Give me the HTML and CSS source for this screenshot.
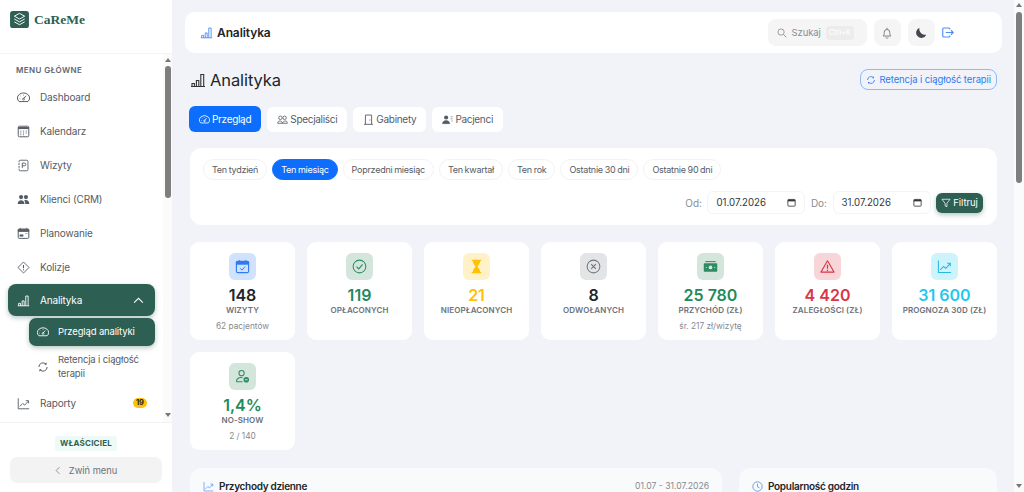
FILE: index.html
```html
<!DOCTYPE html>
<html lang="pl">
<head>
    <meta charset="UTF-8">
    <meta name="viewport" content="width=device-width, initial-scale=1.0">
    <title>Analityka</title>
    <link rel="stylesheet" href="styles.css">
</head>
<body>
    <!-- Shared icons -->
    <svg class="icon-defs" aria-hidden="true">
        <symbol id="i-gauge" viewBox="0 0 16 16"><path d="M2.500 13A7.500 6.300 0 1 1 13.500 13Z" fill="none" stroke="currentColor" stroke-width="1.200" stroke-linejoin="round"/><path d="M8 9.500 11 6" stroke="currentColor" stroke-width="1.200"/><circle cx="8" cy="10" r="1.200" fill="none" stroke="currentColor"/><path d="M4 9.500H3M5 6.800 4.300 6.100M8 5.500V4.500" stroke="currentColor"/></symbol>
        <symbol id="i-bars" viewBox="0 0 16 16"><path d="M1 14.500h14M2 14.500v-3h2.400v3M6.400 14.500v-6h2.400v6M10.800 14.500V2.500h2.900v12" fill="none" stroke="currentColor" stroke-width="1.100"/></symbol>
        <symbol id="i-sync" viewBox="0 0 16 16"><path d="M2.500 8A5.500 5.500 0 0 1 12 4.200M13.500 8A5.500 5.500 0 0 1 4 11.800" fill="none" stroke="currentColor" stroke-width="1.300"/><path d="M12.800 1.800V5H9.800ZM3.200 14.200V11H6.200Z" fill="currentColor"/></symbol>
        <symbol id="i-trend" viewBox="0 0 16 16"><path d="M1.500 1.500V14.500H15" fill="none" stroke="currentColor" stroke-width="1.100"/><path d="M3.500 11.500 7 8l2.500 2L14 5M10.800 4.500H14.200V7.800" fill="none" stroke="currentColor" stroke-width="1.100"/></symbol>
    </svg>

    <aside class="sidebar">
        <div class="brand">
            <svg class="brand-logo" viewBox="0 0 20 18"><rect width="20" height="18" rx="3" fill="#2d5f53"/><path d="M10 2.500 15.500 5.500 10 8.500 4.500 5.500ZM4.500 8.500 10 11.500 15.500 8.500M4.500 11.500 10 14.500 15.500 11.500" fill="none" stroke="#fff" stroke-width="1" stroke-linejoin="round"/></svg>
            <span class="brand-name">CaReMe</span>
        </div>

        <div class="side-body">
            <nav class="side-nav">
                <div class="nav-label">MENU GŁÓWNE</div>
                <a class="nav-item"><svg class="nav-icon"><use href="#i-gauge"/></svg>Dashboard</a>
                <a class="nav-item"><svg class="nav-icon" viewBox="0 0 16 16"><rect x="1.500" y="1.500" width="13" height="13" rx="1.500" fill="none" stroke="currentColor" stroke-width="1.200"/><path d="M1.500 2.500h13v2.500h-13Z" fill="currentColor"/><path d="M4 7.500h1.400M7.300 7.500h1.400M10.600 7.500H12M4 9.800h1.400M7.300 9.800h1.400M10.600 9.800H12M4 12h1.400M7.300 12h1.400" stroke="currentColor"/></svg>Kalendarz</a>
                <a class="nav-item"><svg class="nav-icon" viewBox="0 0 16 16"><rect x="2.500" y="1.500" width="11" height="13" rx="1.500" fill="none" stroke="currentColor" stroke-width="1.100"/><path d="M6.500 11V5h2.600a1.600 1.600 0 0 1 0 3.400H6.500" fill="none" stroke="currentColor" stroke-width="1.100"/><path d="M1 4.500h2.500M1 8h2.500M1 11.500h2.500" stroke="#fff"/></svg>Wizyty</a>
                <a class="nav-item"><svg class="nav-icon" viewBox="0 0 16 16"><circle cx="5" cy="5" r="2.600" fill="currentColor"/><circle cx="11" cy="5" r="2.600" fill="currentColor"/><path d="M.8 13.500c0-6 8.400-6 8.400 0ZM10.200 13.500c0-2-.4-3.300-1.300-4.400 2.800-1.200 6.300.2 6.300 4.400Z" fill="currentColor"/></svg>Klienci (CRM)</a>
                <a class="nav-item"><svg class="nav-icon" viewBox="0 0 16 16"><rect x="1.500" y="2.500" width="13" height="11.500" rx="1.300" fill="none" stroke="currentColor" stroke-width="1.200"/><path d="M1.500 3h13v2.500h-13ZM4 1v2M12 1v2" fill="currentColor" stroke="currentColor"/><path d="M3.500 9.500h4v2h-4ZM10 8h3" fill="currentColor" stroke="currentColor" stroke-width=".6"/></svg>Planowanie</a>
                <a class="nav-item"><svg class="nav-icon" viewBox="0 0 16 16"><path d="M8 1.200 14.800 8 8 14.800 1.200 8Z" fill="none" stroke="currentColor" stroke-width="1.100" stroke-linejoin="round"/><path d="M8 4.800V9M8 10.300v1.200" stroke="currentColor" stroke-width="1.300"/></svg>Kolizje</a>
                <a class="nav-item nav-item-open"><svg class="nav-icon"><use href="#i-bars"/></svg>Analityka<svg class="nav-chevron" viewBox="0 0 12 8"><path d="M1 6.500 6 1.500l5 5" fill="none" stroke="currentColor" stroke-width="1.200"/></svg></a>
                <a class="sub-item sub-item-active"><svg class="sub-icon"><use href="#i-gauge"/></svg>Przegląd analityki</a>
                <a class="sub-item"><svg class="sub-icon"><use href="#i-sync"/></svg><span>Retencja i ciągłość terapii</span></a>
                <a class="nav-item"><svg class="nav-icon"><use href="#i-trend"/></svg>Raporty<span class="nav-badge">19</span></a>
            </nav>
            <div class="scrollbar scrollbar-side">
                <span class="scroll-up"></span>
                <span class="scroll-thumb"></span>
                <span class="scroll-down"></span>
            </div>
        </div>

        <div class="side-footer">
            <span class="role-badge">WŁAŚCICIEL</span>
            <button class="collapse-btn"><svg class="collapse-icon" viewBox="0 0 8 12"><path d="M6 1.500 1.500 6 6 10.500" fill="none" stroke="currentColor"/></svg>Zwiń menu</button>
        </div>
    </aside>

    <main class="main">
        <header class="topbar">
            <svg class="topbar-icon"><use href="#i-bars"/></svg>
            <span class="topbar-title">Analityka</span>
            <div class="search">
                <svg class="search-icon" viewBox="0 0 16 16"><circle cx="6.500" cy="6.500" r="5" fill="none" stroke="currentColor" stroke-width="1.300"/><path d="M10.300 10.300 15 15" stroke="currentColor" stroke-width="1.400"/></svg>
                Szukaj
                <span class="search-key">Ctrl+K</span>
            </div>
            <button class="round-btn"><svg class="round-icon" viewBox="0 0 16 16"><path d="M3 12c1-1.200 1.300-2.500 1.300-5a3.700 3.700 0 0 1 7.400 0c0 2.500.3 3.800 1.300 5ZM8 1v2M6.500 14a1.600 1.600 0 0 0 3 0" fill="none" stroke="currentColor" stroke-width="1.100"/></svg></button>
            <button class="round-btn"><svg class="round-icon moon" viewBox="0 0 16 16"><path d="M6 1a7 7 0 1 0 9 9.200A7.500 7.500 0 0 1 6 1Z" fill="currentColor"/></svg></button>
            <svg class="logout-icon" viewBox="0 0 16 14"><path d="M10.500 3V2.300A1.300 1.300 0 0 0 9.200 1H2.300A1.300 1.300 0 0 0 1 2.300v9.400A1.300 1.300 0 0 0 2.300 13h6.900a1.300 1.300 0 0 0 1.300-1.300V11M5 7h10M12 4l3 3-3 3" fill="none" stroke="currentColor" stroke-width="1.500"/></svg>
        </header>

        <div class="content">
            <div class="page-head">
                <svg class="page-icon"><use href="#i-bars"/></svg>
                <h1 class="page-title">Analityka</h1>
                <a class="retention-link"><svg class="retention-icon"><use href="#i-sync"/></svg>Retencja i ciągłość terapii</a>
            </div>

            <div class="tabs">
                <a class="tab tab-active"><svg class="tab-icon"><use href="#i-gauge"/></svg>Przegląd</a>
                <a class="tab"><svg class="tab-icon" viewBox="0 0 16 16"><circle cx="5" cy="5.500" r="2.500" fill="none" stroke="currentColor" stroke-width="1.200"/><circle cx="11" cy="5.500" r="2.500" fill="none" stroke="currentColor" stroke-width="1.200"/><path d="M1 13.500c0-4.500 6-4.500 7 0ZM8 13.500c1-4.500 7-4.500 7 0Z" fill="none" stroke="currentColor" stroke-width="1.200"/></svg>Specjaliści</a>
                <a class="tab"><svg class="tab-icon" viewBox="0 0 16 16"><path d="M1.500 15h13M3.500 15V1.500h9V15" fill="none" stroke="currentColor" stroke-width="1.300"/><path d="M10 8v1.500" stroke="currentColor" stroke-width="1.300"/></svg>Gabinety</a>
                <a class="tab"><svg class="tab-icon" viewBox="0 0 16 16"><circle cx="6" cy="5" r="3" fill="currentColor"/><path d="M.8 14c0-6 10.400-6 10.400 0ZM12.500 4h3M12.500 7h3M13.500 10h2" fill="currentColor" stroke="currentColor" stroke-width=".8"/></svg>Pacjenci</a>
            </div>

            <section class="filter-card">
                <div class="pills">
                    <a class="pill">Ten tydzień</a>
                    <a class="pill pill-active">Ten miesiąc</a>
                    <a class="pill">Poprzedni miesiąc</a>
                    <a class="pill">Ten kwartał</a>
                    <a class="pill">Ten rok</a>
                    <a class="pill">Ostatnie 30 dni</a>
                    <a class="pill">Ostatnie 90 dni</a>
                </div>
                <div class="date-row">
                    <span class="date-label">Od:</span>
                    <div class="date-input">01.07.2026<svg class="date-icon" viewBox="0 0 16 16"><rect x="1.500" y="2.500" width="13" height="12" rx="1.500" fill="none" stroke="currentColor" stroke-width="1.500"/><path d="M1.500 3h13v3h-13Z" fill="currentColor"/></svg></div>
                    <span class="date-label">Do:</span>
                    <div class="date-input">31.07.2026<svg class="date-icon" viewBox="0 0 16 16"><rect x="1.500" y="2.500" width="13" height="12" rx="1.500" fill="none" stroke="currentColor" stroke-width="1.500"/><path d="M1.500 3h13v3h-13Z" fill="currentColor"/></svg></div>
                    <button class="filter-btn"><svg class="filter-icon" viewBox="0 0 16 16"><path d="M1.500 2h13L9.500 8.500V14l-3-1.500v-4Z" fill="none" stroke="currentColor" stroke-width="1.200" stroke-linejoin="round"/></svg>Filtruj</button>
                </div>
            </section>

            <section class="stats">
                <div class="stat">
                    <div class="stat-icon tint-blue"><svg viewBox="0 0 16 16"><rect x="1.500" y="2.500" width="13" height="12" rx="1.500" fill="none" stroke="currentColor" stroke-width="1.200"/><path d="M1.500 3h13v2.500h-13ZM4.500 1v2M11.500 1v2" fill="currentColor" stroke="currentColor"/><path d="M5.500 10 7.500 11.800 10.800 8" fill="none" stroke="currentColor"/></svg></div>
                    <div class="stat-value">148</div>
                    <div class="stat-label">Wizyty</div>
                    <div class="stat-sub">62 pacjentów</div>
                </div>
                <div class="stat">
                    <div class="stat-icon tint-green"><svg viewBox="0 0 16 16"><circle cx="8" cy="8" r="6.800" fill="none" stroke="currentColor" stroke-width="1.100"/><path d="M4.800 8.200 7.200 10.500 11.300 5.800" fill="none" stroke="currentColor" stroke-width="1.200"/></svg></div>
                    <div class="stat-value text-green">119</div>
                    <div class="stat-label">Opłaconych</div>
                </div>
                <div class="stat">
                    <div class="stat-icon tint-yellow"><svg viewBox="0 0 16 16"><path d="M3 1.500h10M3 14.500h10" stroke="currentColor" stroke-width="1.500"/><path d="M4 2h8c0 3-2.500 4.500-3 6 .5 1.500 3 3 3 6H4c0-3 2.500-4.500 3-6-.5-1.500-3-3-3-6Z" fill="currentColor"/></svg></div>
                    <div class="stat-value text-yellow">21</div>
                    <div class="stat-label">Nieopłaconych</div>
                </div>
                <div class="stat">
                    <div class="stat-icon tint-grey"><svg viewBox="0 0 16 16"><circle cx="8" cy="8" r="6.800" fill="none" stroke="currentColor" stroke-width="1.100"/><path d="M5.500 5.500 10.500 10.500M10.500 5.500 5.500 10.500" stroke="currentColor" stroke-width="1.200"/></svg></div>
                    <div class="stat-value">8</div>
                    <div class="stat-label">Odwołanych</div>
                </div>
                <div class="stat">
                    <div class="stat-icon tint-green"><svg viewBox="0 0 16 16"><path d="M2.500 2.800h11" stroke="currentColor" stroke-width="1.100"/><rect x=".8" y="4.500" width="14.400" height="9" rx=".8" fill="currentColor"/><circle cx="8" cy="9" r="2" fill="#d4e6dc"/><path d="M3 9h1M12 9h1" stroke="#d4e6dc" stroke-width="1.200"/></svg></div>
                    <div class="stat-value text-green">25 780</div>
                    <div class="stat-label">Przychód (zł)</div>
                    <div class="stat-sub">śr. 217 zł/wizytę</div>
                </div>
                <div class="stat">
                    <div class="stat-icon tint-red"><svg viewBox="0 0 16 16"><path d="M8 1.800 15 14H1Z" fill="none" stroke="currentColor" stroke-width="1.100" stroke-linejoin="round"/><path d="M8 6v4.500M8 11.500V13" stroke="currentColor" stroke-width="1.300"/></svg></div>
                    <div class="stat-value text-red">4 420</div>
                    <div class="stat-label">Zaległości (zł)</div>
                </div>
                <div class="stat">
                    <div class="stat-icon tint-cyan"><svg><use href="#i-trend"/></svg></div>
                    <div class="stat-value text-cyan">31 600</div>
                    <div class="stat-label">Prognoza 30d (zł)</div>
                </div>
                <div class="stat">
                    <div class="stat-icon tint-green"><svg viewBox="0 0 16 16"><circle cx="7" cy="4.500" r="2.800" fill="none" stroke="currentColor" stroke-width="1.100"/><path d="M1.500 13.500c0-3.300 3-4.800 6.500-4.200M1.500 13.500H8" fill="none" stroke="currentColor" stroke-width="1.100"/><circle cx="12" cy="11.500" r="3" fill="currentColor"/><path d="M10.500 11.500h3" stroke="#d4e6dc"/></svg></div>
                    <div class="stat-value text-green">1,4%</div>
                    <div class="stat-label">No-show</div>
                    <div class="stat-sub">2 / 140</div>
                </div>
            </section>

            <section class="charts">
                <div class="chart-card chart-wide">
                    <svg class="chart-icon"><use href="#i-trend"/></svg>
                    <span class="chart-title">Przychody dzienne</span>
                    <span class="chart-range">01.07 - 31.07.2026</span>
                </div>
                <div class="chart-card chart-narrow">
                    <svg class="chart-icon" viewBox="0 0 16 16"><circle cx="8" cy="8" r="6.800" fill="none" stroke="currentColor" stroke-width="1.300"/><path d="M8 3.800V8.500L11 10" fill="none" stroke="currentColor" stroke-width="1.300"/></svg>
                    <span class="chart-title">Popularność godzin</span>
                </div>
            </section>
        </div>
    </main>

    <div class="scrollbar scrollbar-page">
        <span class="scroll-up"></span>
        <span class="scroll-thumb"></span>
        <span class="scroll-down"></span>
    </div>
</body>
</html>
```

FILE: styles.css
```css
* {
    box-sizing: border-box;
}

body {
    margin: 0;
    height: 100vh;
    display: flex;
    overflow: hidden;
    background-color: #f1f3f8;
    color: #212529;
    font-family: "Inter", "Noto Sans", sans-serif;
    font-size: 11px;
}

.icon-defs {
    display: none;
}

svg {
    display: block;
    flex-shrink: 0;
}

/* Scrollbars */
.scrollbar {
    flex-shrink: 0;
    display: flex;
    flex-direction: column;
    align-items: center;
    background-color: #fbfbfb;
}

.scrollbar-side {
    width: 9px;
    padding: 4px 0 5px;
}

.scrollbar-page {
    width: 10px;
    padding: 3px 0 4px;
}

.scroll-up,
.scroll-down {
    width: 0;
    height: 0;
    border-left: 3px solid transparent;
    border-right: 3px solid transparent;
}

.scroll-up {
    border-bottom: 4px solid #777;
}

.scroll-down {
    margin-top: auto;
    border-top: 4px solid #777;
}

.scroll-thumb {
    width: 6px;
    background-color: #7e7e7e;
    border-radius: 3px;
}

.scrollbar-side .scroll-thumb {
    height: 132px;
    margin-top: 4px;
}

.scrollbar-page .scroll-thumb {
    height: 171px;
    margin-top: 5px;
}

/* Sidebar */
.sidebar {
    width: 172px;
    flex-shrink: 0;
    display: flex;
    flex-direction: column;
    background-color: #fff;
}

.brand {
    height: 54px;
    flex-shrink: 0;
    display: flex;
    align-items: flex-start;
    gap: 5px;
    padding: 11px 10px 0;
    border-bottom: 1px solid #f3f4f6;
}

.brand-logo {
    width: 19px;
    height: 17px;
}

.brand-name {
    font-family: "Liberation Serif", serif;
    font-size: 13.500px;
    font-weight: 700;
    color: #2d5f53;
    line-height: 18px;
}

.side-body {
    flex: 1;
    min-height: 0;
    display: flex;
}

.side-nav {
    flex: 1;
    overflow: hidden;
    padding-top: 10px;
}

.nav-label {
    height: 12px;
    margin-bottom: 4px;
    padding-left: 16px;
    font-size: 8px;
    font-weight: 600;
    line-height: 12px;
    letter-spacing: 0.4px;
    color: #5f6670;
}

.nav-item {
    height: 34px;
    margin-left: 8px;
    width: 147px;
    padding-left: 9px;
    display: flex;
    align-items: center;
    gap: 10px;
    font-size: 10px;
    letter-spacing: -0.15px;
    color: #555c64;
}

.nav-icon {
    width: 13px;
    height: 13px;
}

.nav-item-open {
    height: 32px;
    background-color: #2d5f53;
    border-radius: 8px;
    color: #fff;
    box-shadow: 0 2px 5px rgba(45, 95, 83, 0.35);
}

.nav-chevron {
    width: 11px;
    height: 7px;
    margin-left: auto;
    margin-right: 11px;
}

.sub-item {
    width: 126px;
    min-height: 34px;
    margin-left: 29px;
    margin-bottom: 2px;
    padding: 0 8px;
    display: flex;
    align-items: center;
    gap: 9px;
    font-size: 9.500px;
    letter-spacing: -0.15px;
    line-height: 14px;
    color: #555c64;
}

.sub-item-active {
    min-height: 28px;
    margin-top: 2px;
    margin-bottom: 4px;
    background-color: #2d5f53;
    border-radius: 7px;
    color: #fff;
    box-shadow: 0 2px 5px rgba(45, 95, 83, 0.35);
}

.sub-icon {
    width: 12px;
    height: 12px;
}

.nav-badge {
    margin-left: auto;
    margin-right: 8px;
    padding: 0 3px;
    background-color: #ffc107;
    border-radius: 5px;
    font-size: 7.500px;
    font-weight: 700;
    line-height: 10px;
    letter-spacing: 0;
    color: #212529;
}

.side-footer {
    height: 70px;
    flex-shrink: 0;
    padding-top: 13px;
    display: flex;
    flex-direction: column;
    align-items: center;
    gap: 6px;
    border-top: 1px solid #f0f1f3;
}

.role-badge {
    padding: 0 5px;
    background-color: #eefaf7;
    border-radius: 3px;
    font-size: 8px;
    font-weight: 700;
    line-height: 15px;
    letter-spacing: 0.2px;
    color: #2d5f53;
}

.collapse-btn {
    width: 152px;
    height: 26px;
    display: flex;
    align-items: center;
    justify-content: center;
    gap: 8px;
    background-color: #f3f3f4;
    border: 0;
    border-radius: 7px;
    font: inherit;
    font-size: 9.300px;
    color: #6b7178;
}

.collapse-icon {
    width: 6px;
    height: 9px;
}

/* Main area */
.main {
    flex: 1;
    min-width: 0;
    overflow: hidden;
    padding: 12px 12px 0 13px;
}

.topbar {
    height: 41px;
    display: flex;
    align-items: center;
    padding: 0 48px 0 15px;
    background-color: #fff;
    border-radius: 10px;
}

.topbar-icon {
    width: 13px;
    height: 13px;
    color: #4d8cf5;
    margin-right: 4px;
}

.topbar-title {
    margin-right: auto;
    font-size: 12px;
    font-weight: 600;
    letter-spacing: -0.1px;
}

.search {
    width: 99px;
    height: 27px;
    margin-right: 7.500px;
    padding: 0 9px;
    display: flex;
    align-items: center;
    gap: 5px;
    background-color: #f5f5f6;
    border-radius: 8px;
    font-size: 9.500px;
    letter-spacing: -0.1px;
    color: #888d93;
}

.search-icon {
    width: 10px;
    height: 10px;
}

.search-key {
    padding: 0 3px;
    background-color: #ececed;
    border-radius: 3px;
    font-size: 7.500px;
    line-height: 14px;
    color: #fff;
}

.round-btn {
    width: 26.500px;
    height: 27px;
    margin-right: 7.500px;
    padding: 0;
    display: flex;
    align-items: center;
    justify-content: center;
    background-color: #f5f5f6;
    border: 0;
    border-radius: 8px;
    color: #666b71;
}

.round-icon {
    width: 12px;
    height: 12px;
}

.moon {
    color: #44484d;
}

.logout-icon {
    width: 12px;
    height: 11px;
    color: #4d8cf5;
}

.content {
    padding: 0 5px;
}

.page-head {
    height: 53px;
    display: flex;
    align-items: center;
}

.page-icon {
    width: 16px;
    height: 16px;
    color: #333;
    margin-right: 4px;
}

.page-title {
    margin: 0 auto 0 0;
    font-size: 16.500px;
    font-weight: 400;
    letter-spacing: -0.1px;
}

.retention-link {
    height: 21px;
    padding: 0 5px;
    display: flex;
    align-items: center;
    gap: 3px;
    border: 1px solid #8db8fb;
    border-radius: 8px;
    font-size: 9.500px;
    letter-spacing: -0.1px;
    color: #2f7bf0;
}

.retention-icon {
    width: 10px;
    height: 10px;
}

.tabs {
    display: flex;
    gap: 6px;
    align-items: center;
    margin-left: -1px;
}

.tab {
    height: 25px;
    padding: 0 10px;
    display: flex;
    align-items: center;
    gap: 2px;
    background-color: #fff;
    border-radius: 6px;
    font-size: 10px;
    letter-spacing: -0.3px;
    color: #555c64;
}

.tab-active {
    height: 26px;
    background-color: #0d6efd;
    color: #fff;
}

.tab-icon {
    width: 11px;
    height: 11px;
}

.filter-card {
    height: 77px;
    margin-top: 16px;
    padding: 11px 14px 0 13px;
    background-color: #fff;
    border-radius: 12px;
}

.pills {
    display: flex;
    gap: 5px;
}

.pill {
    height: 21px;
    padding: 0 8px;
    display: flex;
    align-items: center;
    border: 1px solid #f1f2f4;
    border-radius: 11px;
    font-size: 9px;
    letter-spacing: -0.25px;
    word-spacing: -0.5px;
    color: #555c64;
}

.pill-active {
    background-color: #0d6efd;
    border-color: #0d6efd;
    color: #fff;
}

.date-row {
    margin-top: 11px;
    display: flex;
    align-items: center;
    justify-content: flex-end;
    gap: 5.500px;
}

.date-label {
    font-size: 10px;
    color: #888d93;
}

.date-input {
    width: 98px;
    height: 23px;
    padding: 0 8px;
    display: flex;
    align-items: center;
    justify-content: space-between;
    border: 1px solid #f3f4f6;
    border-radius: 6px;
    font-size: 9.700px;
    color: #33383d;
}

.date-icon {
    width: 9px;
    height: 9px;
}

.filter-btn {
    width: 47px;
    height: 20px;
    padding: 0;
    display: flex;
    align-items: center;
    justify-content: center;
    gap: 2px;
    background-color: #2d5f53;
    border: 0;
    border-radius: 6px;
    box-shadow: 0 2px 5px rgba(45, 95, 83, 0.35);
    font: inherit;
    font-size: 9.500px;
    letter-spacing: -0.1px;
    color: #fff;
}

.filter-icon {
    width: 10px;
    height: 10px;
}

/* Stat cards */
.stats {
    margin-top: 17px;
    display: grid;
    grid-template-columns: repeat(7, 1fr);
    gap: 12px;
}

.stat {
    height: 98px;
    padding-top: 11px;
    display: flex;
    flex-direction: column;
    align-items: center;
    background-color: #fff;
    border-radius: 9px;
}

.stat-icon {
    width: 27px;
    height: 27px;
    padding: 6px;
    border-radius: 6px;
}

.stat-icon svg {
    width: 15px;
    height: 15px;
}

.tint-blue { background-color: #d0e2fe; color: #2f7bf0; }
.tint-green { background-color: #d4e6dc; color: #2e8b62; }
.tint-yellow { background-color: #fff1c8; color: #ffc107; }
.tint-grey { background-color: #e3e4e5; color: #70767c; }
.tint-red { background-color: #f8d5d8; color: #dc3545; }
.tint-cyan { background-color: #cdf3fd; color: #2ab7e0; }

.stat-value {
    margin-top: 5px;
    font-size: 16px;
    font-weight: 600;
    line-height: 20px;
    color: #212529;
}

.text-green { color: #1f8a5c; }
.text-yellow { color: #ffc107; }
.text-red { color: #dc3545; }
.text-cyan { color: #1fc8f0; }

.stat-label {
    font-size: 8px;
    font-weight: 600;
    line-height: 11px;
    letter-spacing: 0.1px;
    text-transform: uppercase;
    color: #6c727a;
}

.stat-sub {
    margin-top: 4px;
    font-size: 8.300px;
    line-height: 12px;
    color: #858a90;
}

/* Chart cards, only the top shows in the window */
.charts {
    margin-top: 18px;
    display: flex;
    gap: 17px;
}

.chart-card {
    height: 300px;
    padding: 12px 13px;
    display: flex;
    align-items: flex-start;
    gap: 5px;
    background-color: #f9fafb;
    border-radius: 12px;
}

.chart-wide {
    width: 532px;
}

.chart-narrow {
    flex: 1;
}

.chart-icon {
    width: 11px;
    height: 11px;
    margin-top: 1px;
    color: #5a97f5;
}

.chart-title {
    font-size: 10px;
    font-weight: 600;
    letter-spacing: -0.3px;
}

.chart-range {
    margin-left: auto;
    font-size: 8.600px;
    line-height: 13px;
    color: #868b91;
}
```
